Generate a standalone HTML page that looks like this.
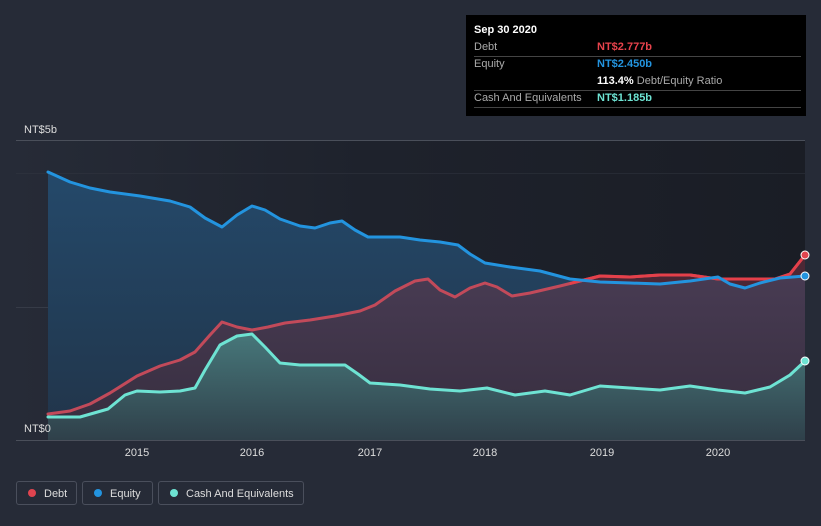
<!DOCTYPE html>
<html><head><style>
body{margin:0;background:#262b37;font-family:"Liberation Sans",sans-serif;width:821px;height:526px;overflow:hidden;position:relative}
.tt{position:absolute;left:466px;top:15px;width:340px;height:101px;background:#000;color:#fff;font-size:11px}
.tt .r{position:absolute;left:8px;width:327px;border-bottom:1px solid #444;height:17px;line-height:17px}
.tt .l{color:#aaa}
.tt .v{position:absolute;left:123px;top:0;font-weight:bold}
.lg{position:absolute;top:481px;height:24px;border:1px solid #4a4f5c;border-radius:3px;color:#ddd;font-size:11px;line-height:24px;box-sizing:border-box}
.lg i{display:inline-block;width:8px;height:8px;border-radius:50%;margin:0 8px 0 11px;vertical-align:-0px}
</style></head><body>
<svg width="821" height="526" style="position:absolute;left:0;top:0">
<defs>
<linearGradient id="cg" x1="0" y1="0" x2="0" y2="1"><stop offset="0" stop-color="#47777a"/><stop offset="1" stop-color="#2f404a"/></linearGradient>
<linearGradient id="dg" x1="0" y1="0" x2="0" y2="1"><stop offset="0" stop-color="#4a3d55"/><stop offset="1" stop-color="#362d3e"/></linearGradient>
<linearGradient id="eg" x1="0" y1="0" x2="0" y2="1"><stop offset="0" stop-color="#24496a"/><stop offset="1" stop-color="#213449"/></linearGradient>
<linearGradient id="bg" x1="0" y1="0" x2="1" y2="0"><stop offset="0" stop-color="#262b37"/><stop offset="0.45" stop-color="#1e222c"/><stop offset="1" stop-color="#1a1d25"/></linearGradient>
<clipPath id="rc"><rect x="570" y="0" width="240" height="526"/></clipPath>
</defs>
<rect x="16" y="140" width="789" height="300" fill="url(#bg)"/>
<line x1="16" y1="140.5" x2="805" y2="140.5" stroke="#4a4f5a"/>
<line x1="16" y1="173.5" x2="805" y2="173.5" stroke="#33374277"/>
<line x1="16" y1="307.5" x2="805" y2="307.5" stroke="#363b47"/>
<polygon fill="url(#eg)" points="48,172 70,182 90,188 110,192 140,196 170,201 190,207 205,218 222,227 237,215 252,206 265,210 280,219 300,226 315,228 330,223 342,221 355,230 368,237 385,237 400,237 420,240 440,242 458,245 470,254 485,263 510,267 540,271 570,279 600,282 630,283 660,284 690,281 718,277 730,284 745,288 760,283 780,278 805,276 805,440 48,440"/>
<polygon fill="url(#dg)" points="48,414 70,411 90,404 110,393 137,376 160,366 180,360 195,352 210,335 222,322 237,327 252,330 268,327 285,323 310,320 335,316 360,311 375,305 395,291 415,281 428,279 440,290 455,297 470,288 485,283 497,287 512,296 530,293 560,286 600,276 630,277 660,275 690,275 718,279 745,279 775,279 790,274 805,255 805,440 48,440"/>
<polygon fill="#4d2632" opacity="0.9" points="575,282 600,276 630,277 660,275 690,275 712,278 690,281 660,284 630,283 600,282"/>
<polygon fill="#4d2632" opacity="0.9" points="722,279 745,279 775,279 790,274 805,255 805,276 780,278 760,283 745,288 730,284"/>
<polygon fill="url(#cg)" points="48,417 80,417 108,409 125,395 137,391 160,392 180,391 195,388 205,370 220,345 237,336 252,334 265,347 280,363 300,365 325,365 345,365 358,374 370,383 400,385 430,389 460,391 487,388 515,395 545,391 570,395 600,386 630,388 660,390 690,386 718,390 745,393 770,387 790,375 805,361 805,440 48,440"/>
<line x1="16" y1="440.5" x2="805" y2="440.5" stroke="#4a4f5a"/>
<g fill="none" stroke-width="3" stroke-linejoin="round" stroke-linecap="round">
<polyline id="debt" stroke="#c24a5a" points="48,414 70,411 90,404 110,393 137,376 160,366 180,360 195,352 210,335 222,322 237,327 252,330 268,327 285,323 310,320 335,316 360,311 375,305 395,291 415,281 428,279 440,290 455,297 470,288 485,283 497,287 512,296 530,293 560,286 600,276 630,277 660,275 690,275 718,279 745,279 775,279 790,274 805,255"/>
<polyline clip-path="url(#rc)" stroke="#e5404a" points="560,286 600,276 630,277 660,275 690,275 718,279 745,279 775,279 790,274 805,255"/>
<polyline stroke="#2394df" points="48,172 70,182 90,188 110,192 140,196 170,201 190,207 205,218 222,227 237,215 252,206 265,210 280,219 300,226 315,228 330,223 342,221 355,230 368,237 385,237 400,237 420,240 440,242 458,245 470,254 485,263 510,267 540,271 570,279 600,282 630,283 660,284 690,281 718,277 730,284 745,288 760,283 780,278 805,276"/>
<polyline stroke="#6ee3d3" points="48,417 80,417 108,409 125,395 137,391 160,392 180,391 195,388 205,370 220,345 237,336 252,334 265,347 280,363 300,365 325,365 345,365 358,374 370,383 400,385 430,389 460,391 487,388 515,395 545,391 570,395 600,386 630,388 660,390 690,386 718,390 745,393 770,387 790,375 805,361"/>
</g>
<circle cx="805" cy="255" r="4" fill="#e0444f" stroke="#fff" stroke-width="1"/>
<circle cx="805" cy="276" r="4" fill="#2394df" stroke="#fff" stroke-width="1"/>
<circle cx="805" cy="361" r="4" fill="#6ee3d3" stroke="#fff" stroke-width="1"/>
<g fill="#ddd" font-size="11" font-family="Liberation Sans" text-anchor="middle">
<text x="137" y="456">2015</text><text x="252" y="456">2016</text><text x="370" y="456">2017</text>
<text x="485" y="456">2018</text><text x="602" y="456">2019</text><text x="718" y="456">2020</text>
</g>
<text x="24" y="133" fill="#ddd" font-size="11" font-family="Liberation Sans">NT$5b</text>
<text x="24" y="432" fill="#ddd" font-size="11" font-family="Liberation Sans">NT$0</text>
</svg>
<div class="tt">
<div style="position:absolute;left:8px;top:9px;font-weight:bold">Sep 30 2020</div>
<div class="r" style="top:24px"><span class="l">Debt</span><span class="v" style="color:#e8434c">NT$2.777b</span></div>
<div class="r" style="top:41px;border:none"><span class="l">Equity</span><span class="v" style="color:#2394df">NT$2.450b</span></div>
<div class="r" style="top:58px"><span class="v">113.4% <span style="color:#aaa;font-weight:normal">Debt/Equity Ratio</span></span></div>
<div class="r" style="top:75px"><span class="l">Cash And Equivalents</span><span class="v" style="color:#6ee3d3">NT$1.185b</span></div>
</div>
<div class="lg" style="left:16px;width:61px"><i style="background:#e0444f"></i>Debt</div>
<div class="lg" style="left:82px;width:71px"><i style="background:#2394df"></i>Equity</div>
<div class="lg" style="left:158px;width:146px"><i style="background:#6ee3d3"></i>Cash And Equivalents</div>
</body></html>
